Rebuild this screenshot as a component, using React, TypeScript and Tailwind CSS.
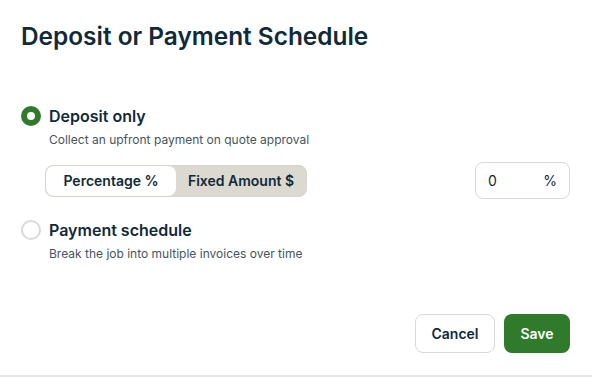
export default function App() {
  return (
    <div
      className="h-[377px] w-[592px] border-b-2 border-[#e3e5e8] bg-white pl-[21px] pr-[22px] pt-5 text-[#102a3a]"
      style={{ fontFamily: "Inter, 'Noto Sans', sans-serif" }}
    >
      <h1 className="text-[24.4px] font-semibold leading-8">Deposit or Payment Schedule</h1>

      {/* Deposit only */}
      <div className="mt-[52px] flex items-center gap-2 leading-6">
        <span className="h-5 w-5 rounded-full border-[6px] border-[#2f7a2b] bg-white" />
        <span className="text-[16px] font-semibold">Deposit only</span>
      </div>
      <p className="ml-7 mt-[2px] text-[12px] leading-5 text-[#45555f]">Collect an upfront payment on quote approval</p>

      <div className="mt-[12px] flex h-[37px] items-center justify-between pl-6">
        <div className="flex h-8 w-[262px] rounded-lg border border-[#d8d5cc] bg-[#dcd9d0] text-[14px] font-semibold">
          <button className="flex-1 rounded-lg bg-white">Percentage %</button>
          <button className="flex-1">Fixed Amount $</button>
        </div>
        <div className="flex h-[37px] w-[95px] items-center justify-between rounded-lg border border-[#d5d9de] px-3 text-[14px]">
          <span>0</span>
          <span>%</span>
        </div>
      </div>

      {/* Payment schedule */}
      <div className="mt-[19px] flex items-center gap-2 leading-6">
        <span className="h-5 w-5 rounded-full border-2 border-[#d6dadf] bg-white" />
        <span className="text-[16px] font-semibold">Payment schedule</span>
      </div>
      <p className="ml-7 mt-[2px] text-[12px] leading-5 text-[#45555f]">Break the job into multiple invoices over time</p>

      <div className="mt-[50px] flex justify-end gap-[9px] text-[14px] font-semibold">
        <button className="h-[39px] w-20 rounded-lg border border-[#d5d9de] bg-white">Cancel</button>
        <button className="h-[39px] w-[66px] rounded-lg bg-[#2f7a2b] text-white">Save</button>
      </div>
    </div>
  );
}
